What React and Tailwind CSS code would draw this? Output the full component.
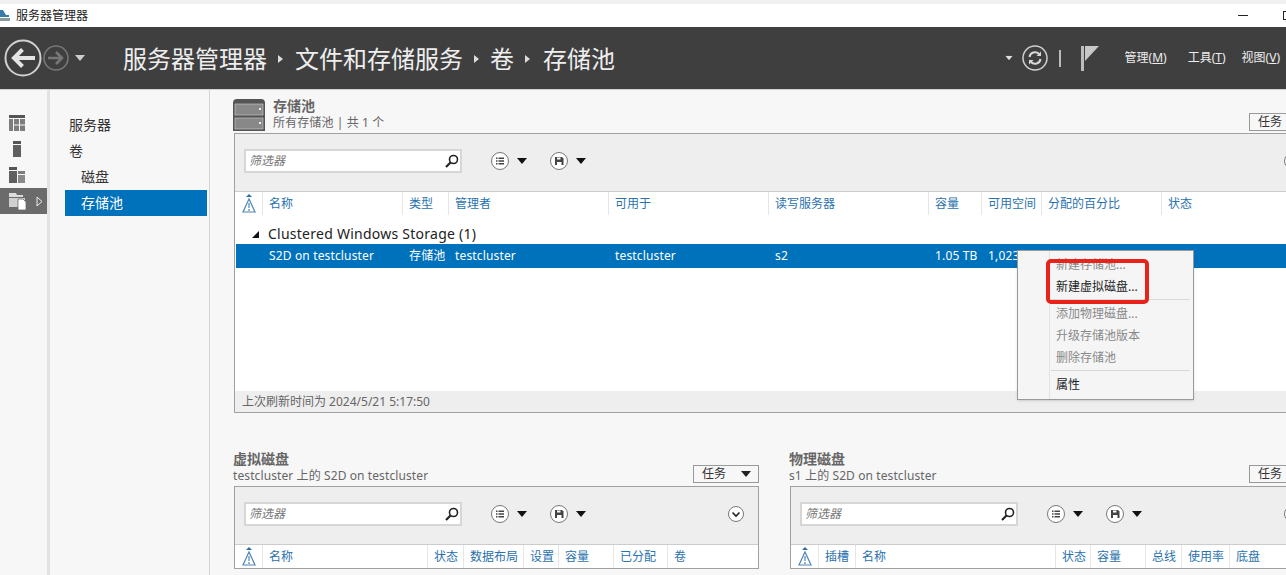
const navItems = [
  { label: '服务器', indent: false },
  { label: '卷', indent: false },
  { label: '磁盘', indent: true },
  { label: '存储池', indent: true, active: true },
];

const poolColumns = ['名称', '类型', '管理者', '可用于', '读写服务器', '容量', '可用空间', '分配的百分比', '状态'];
const poolRow = ['S2D on testcluster', '存储池', 'testcluster', 'testcluster', 's2', '1.05 TB', '1,023 GB'];
const diskColumns = ['名称', '状态', '数据布局', '设置', '容量', '已分配', '卷'];
const physicalColumns = ['插槽', '名称', '状态', '容量', '总线', '使用率', '底盘'];

const Triangle = ({ className = '' }) => (
  <svg width="10" height="6" viewBox="0 0 10 6" className={className}>
    <path d="M0 0h10L5 6z" fill="currentColor" />
  </svg>
);

const BackButton = () => (
  <svg width="38" height="38" viewBox="0 0 38 38" fill="none">
    <circle cx="19" cy="19" r="17.500" stroke="#d0d0d0" strokeWidth="2" />
    <path d="M10 19h21M18.500 10.500L10 19l8.500 8.500" stroke="#e4e4e4" strokeWidth="4" />
  </svg>
);

const ForwardButton = () => (
  <svg width="26" height="26" viewBox="0 0 26 26" fill="none">
    <circle cx="13" cy="13" r="12" stroke="#777" strokeWidth="1.600" />
    <path d="M19 13H5M13 7l6 6-6 6" stroke="#777" strokeWidth="2.600" />
  </svg>
);

const RefreshIcon = () => (
  <svg width="26" height="26" viewBox="0 0 26 26" fill="none">
    <circle cx="13" cy="13" r="12" stroke="#d0d0d0" strokeWidth="1.500" />
    <path d="M7.500 12a5.500 5.500 0 0 1 9.500-3l1 1M18.500 14a5.500 5.500 0 0 1-9.500 3l-1-1" stroke="#d8d8d8" strokeWidth="2" />
    <path d="M19 6.500V11h-4.500zM7 19.500V15h4.500z" fill="#d8d8d8" />
  </svg>
);

const FlagIcon = () => (
  <svg width="18" height="25" viewBox="0 0 18 25">
    <rect x="0" y="0" width="3" height="25" fill="#bdbdbd" />
    <path d="M4 0h14L4 15z" fill="#c8c8c8" />
  </svg>
);

const GridIcon = () => (
  <svg width="16" height="16" viewBox="0 0 16 16">
    <rect width="16" height="3" fill="#555" />
    <path d="M0 4h4v12H0zM5 4h5v5.500H5zM11 4h5v5.500h-5zM5 10.500h5V16H5zM11 10.500h5V16h-5z" fill="#7d7d7d" />
  </svg>
);

const ServerIcon = () => (
  <svg width="16" height="16" viewBox="0 0 16 16">
    <rect x="4" width="8" height="3" fill="#555" />
    <rect x="4" y="4" width="8" height="12" fill="#606060" />
  </svg>
);

const RolesIcon = () => (
  <svg width="16" height="16" viewBox="0 0 16 16">
    <rect width="8" height="3" fill="#555" />
    <rect y="4" width="8" height="12" fill="#606060" />
    <rect x="9" y="4" width="7" height="3" fill="#7d7d7d" />
    <rect x="9" y="8" width="7" height="8" fill="#8a8a8a" />
  </svg>
);

const FilesIcon = () => (
  <svg width="18" height="17" viewBox="0 0 18 17">
    <path d="M0 0h7l1 2h6v2H0z" fill="#dcdcdc" />
    <path d="M0 5h16v9H0z" fill="#d0d0d0" />
    <path d="M9 6h5l3 3v8H9z" fill="#fff" stroke="#6b6b6b" strokeWidth="0.800" />
  </svg>
);

const StorageIcon = () => (
  <svg width="32" height="32" viewBox="0 0 32 32" className="mt-px shrink-0">
    <path d="M4 0h24a4 4 0 0 1 4 4v28H0V4a4 4 0 0 1 4-4z" fill="#555" />
    <rect x="2" y="5" width="28" height="11" fill="#888" stroke="#d0d0d0" strokeWidth="0.600" />
    <rect x="2" y="19" width="28" height="11" fill="#888" stroke="#d0d0d0" strokeWidth="0.600" />
    <rect x="26" y="9" width="2" height="2" fill="#eee" />
    <rect x="26" y="23" width="2" height="2" fill="#eee" />
  </svg>
);

const SearchIcon = () => (
  <svg width="14" height="14" viewBox="0 0 14 14" fill="none">
    <circle cx="8.500" cy="5.500" r="4" stroke="#222" strokeWidth="1.600" />
    <path d="M5.500 8.500L1 13" stroke="#222" strokeWidth="2.200" />
  </svg>
);

const ListCircle = () => (
  <svg width="18" height="18" viewBox="0 0 18 18">
    <circle cx="9" cy="9" r="8.500" fill="#fff" stroke="#777" />
    <path d="M5 5.500h1.500V7H5zM5 8.300h1.500v1.500H5zM5 11h1.500v1.500H5zM7.500 5.500H13V7H7.500zM7.500 8.300H13v1.500H7.500zM7.500 11H13v1.500H7.500z" fill="#444" />
  </svg>
);

const SaveCircle = () => (
  <svg width="18" height="18" viewBox="0 0 18 18">
    <circle cx="9" cy="9" r="8.500" fill="#fff" stroke="#777" />
    <path d="M5 5h7l1.500 1.500V13H5z" fill="#444" />
    <path d="M7 5.500h3.500v2H7zM7 10h4.500v3H7z" fill="#fff" />
  </svg>
);

const ChevronCircle = () => (
  <svg width="16" height="16" viewBox="0 0 16 16" fill="none">
    <circle cx="8" cy="8" r="7.500" fill="#fff" stroke="#777" />
    <path d="M4.500 6.500L8 10l3.500-3.500" stroke="#222" strokeWidth="1.600" />
  </svg>
);

const AlertSortIcon = () => (
  <svg width="14" height="19" viewBox="0 0 14 19" fill="none">
    <path d="M4 3l3-3 3 3z" fill="#2a6ea6" />
    <path d="M7 5L1 18h12z" stroke="#4f86b5" strokeWidth="1.200" />
    <path d="M7 9v5M7 15v2" stroke="#4f86b5" strokeWidth="1.200" />
  </svg>
);

const TasksButton = () => (
  <div className="flex h-[18px] w-[66px] shrink-0 items-center justify-between border border-[#999] bg-[#f7f7f7] pl-2 pr-[7px] text-xs text-[#333]">
    <span>任务</span>
    <Triangle className="text-[#222]" />
  </div>
);

const Toolbar = () => (
  <div className="flex h-[58px] items-start border-b border-[#ccc] bg-[#eee] pl-[9px] pr-[14px] pt-[15px]">
    <div className="flex h-[24px] w-[218px] items-center justify-between border-2 border-[#d6d6d6] bg-white pl-[3px] pr-px">
      <span className="text-xs italic text-[#777]">筛选器</span>
      <SearchIcon />
    </div>
    <div className="ml-[29px] mt-[3px] flex items-center gap-[8px]">
      <ListCircle />
      <Triangle className="text-[#111]" />
    </div>
    <div className="ml-[23px] mt-[3px] flex items-center gap-[8px]">
      <SaveCircle />
      <Triangle className="text-[#111]" />
    </div>
    <div className="ml-auto mt-[4px]">
      <ChevronCircle />
    </div>
  </div>
);

const HeaderRow = ({ columns, gridClass }) => (
  <div className={`grid h-[23px] items-center pl-[1px] text-xs text-[#2a72ad] ${gridClass}`}>
    <div className="flex h-full items-center justify-center">
      <AlertSortIcon />
    </div>
    {columns.map((column) => (
      <div key={column} className="flex h-full items-center whitespace-nowrap border-l border-[#e6e6e6] pl-[6px]">
        {column}
      </div>
    ))}
  </div>
);

const poolGrid = 'grid-cols-[26px_140px_46px_160px_160px_160px_53px_60px_120px_36px]';

const SectionTitle = ({ title, subtitle }) => (
  <div>
    <div className="text-sm font-semibold leading-4 text-[#666]">{title}</div>
    <div className="mt-px text-xs leading-4 tracking-[0.1px] text-[#666]">{subtitle}</div>
  </div>
);

const DetailSection = ({ title, subtitle, columns, gridClass }) => (
  <section>
    <div className="flex items-end justify-between">
      <SectionTitle title={title} subtitle={subtitle} />
      <div className="mb-[1px]">
        <TasksButton />
      </div>
    </div>
    <div className="ml-px mt-[2px] border border-[#a0a0a0] bg-white">
      <Toolbar />
      <HeaderRow columns={columns} gridClass={gridClass} />
    </div>
  </section>
);

const ContextMenu = () => (
  <div className="absolute left-[1017px] top-[250px] w-[177px] border border-[#999] bg-[#f5f5f5] py-[3px] text-xs text-[#888] shadow-sm">
    <div className="absolute bottom-0 left-[31px] top-0 w-px bg-[#e2e2e2]" />
    <div className="flex h-[22px] items-center pl-[38px]">新建存储池...</div>
    <div className="flex h-[22px] items-center pl-[38px] text-[#222]">新建虚拟磁盘...</div>
    <div className="my-[1px] ml-[33px] mr-[3px] h-px bg-[#d8d8d8]" />
    <div className="mt-[3px] flex h-[22px] items-center pl-[38px]">添加物理磁盘...</div>
    <div className="flex h-[22px] items-center pl-[38px]">升级存储池版本</div>
    <div className="flex h-[22px] items-center pl-[38px]">删除存储池</div>
    <div className="my-[1px] ml-[33px] mr-[3px] h-px bg-[#d8d8d8]" />
    <div className="mt-[3px] flex h-[22px] items-center pl-[38px] text-[#222]">属性</div>
  </div>
);

export default function App() {
  return (
    <div className="relative flex h-[575px] w-[1286px] flex-col overflow-hidden bg-[#f7f7f7] font-['Noto_Sans','Noto_Sans_CJK_SC',sans-serif]">
      <div className="h-1 shrink-0 bg-[#f0f0f0]" />

      {/* Title bar */}
      <div className="flex h-[23px] shrink-0 items-center bg-white">
        <svg width="10" height="14" viewBox="0 0 10 14" className="shrink-0">
          <path d="M0 1h3l3 5h3v2H0z" fill="#3a7ca8" />
          <path d="M0 9h10v3H0z" fill="#8a9aa5" />
        </svg>
        <span className="ml-[6px] text-xs text-[#222]">服务器管理器</span>
        <div className="ml-auto mr-[35px] h-px w-[10px] bg-[#222]" />
        <div className="mr-[-7px] h-[9px] w-[10px] border border-[#222]" />
      </div>

      {/* Header */}
      <header className="flex h-[63px] shrink-0 items-center border-b border-[#d0d0d0] bg-[#3f3f3f]">
        <div className="ml-[4px] flex items-center">
          <BackButton />
          <div className="ml-[1px]">
            <ForwardButton />
          </div>
          <Triangle className="ml-[6px] text-[#ccc]" />
        </div>
        <nav className="ml-[38px] mt-px flex items-center gap-[11px] text-2xl leading-8 text-[#eee]">
          <span>服务器管理器</span>
          <span className="h-0 w-0 border-y-4 border-l-[5px] border-y-transparent border-l-[#ddd]" />
          <span className="ml-[1px]">文件和存储服务</span>
          <span className="h-0 w-0 border-y-4 border-l-[5px] border-y-transparent border-l-[#ddd]" />
          <span>卷</span>
          <span className="h-0 w-0 border-y-4 border-l-[5px] border-y-transparent border-l-[#ddd]" />
          <span className="ml-[2px]">存储池</span>
        </nav>
        <div className="ml-auto flex items-center text-xs text-[#eee]">
          <Triangle className="scale-75 text-[#ddd]" />
          <div className="ml-[8px]">
            <RefreshIcon />
          </div>
          <div className="ml-[11px] h-[17px] w-[2px] bg-[#bbb]" />
          <div className="ml-[20px]">
            <FlagIcon />
          </div>
          <span className="ml-[26px]">管理(<span className="underline">M</span>)</span>
          <span className="ml-[21px]">工具(<span className="underline">T</span>)</span>
          <span className="ml-[16px] mr-[6px] whitespace-nowrap">视图(<span className="underline">V</span>)</span>
        </div>
      </header>

      <div className="flex min-h-0 flex-1">
        {/* Left rail */}
        <aside className="flex w-[50px] shrink-0 flex-col border-r-[3px] border-[#e2e2e2] bg-[#f7f7f7] pt-[20px]">
          <div className="flex h-[26px] items-center pl-[9px]"><GridIcon /></div>
          <div className="flex h-[26px] items-center pl-[9px]"><ServerIcon /></div>
          <div className="flex h-[26px] items-center pl-[9px]"><RolesIcon /></div>
          <div className="flex h-[26px] items-center bg-[#6b6b6b] pl-[9px]">
            <FilesIcon />
            <svg width="7" height="11" viewBox="0 0 7 11" className="ml-[9px]" fill="none">
              <path d="M1 1l5 4.500L1 10z" stroke="#eee" />
            </svg>
          </div>
        </aside>

        {/* Section nav */}
        <nav className="flex w-[160px] shrink-0 flex-col border-r border-[#d4d4d4] pl-[15px] pr-[2px] pt-[22px] text-sm text-[#333]">
          {navItems.map((item) => (
            <div
              key={item.label}
              className={`flex h-[26px] items-center ${item.indent ? 'pl-[16px]' : 'pl-[4px]'} ${item.active ? 'bg-[#0072bc] text-white' : ''}`}
            >
              {item.label}
            </div>
          ))}
        </nav>

        {/* Main */}
        <main className="min-w-0 flex-1 overflow-hidden pl-[23px] pt-[8px]">
          <div className="w-[1082px]">
            <div className="flex items-start justify-between">
              <div className="flex gap-2">
                <StorageIcon />
                <SectionTitle title="存储池" subtitle="所有存储池 | 共 1 个" />
              </div>
              <div className="mt-[15px]">
                <TasksButton />
              </div>
            </div>

            <div className="ml-px mt-[2px] flex h-[280px] flex-col border border-[#a0a0a0] bg-white">
              <Toolbar />
              <HeaderRow columns={poolColumns} gridClass={poolGrid} />
              <div className="flex h-[29px] items-end pl-[17px] text-sm tracking-[0.25px] text-[#222]">
                <div className="flex h-[20px] items-center">
                  <svg width="7" height="7" viewBox="0 0 7 7">
                    <path d="M7 0v7H0z" fill="#111" />
                  </svg>
                  <span className="ml-[9px]">Clustered Windows Storage (1)</span>
                </div>
              </div>
              <div className={`ml-[1px] grid h-[24px] items-center bg-[#0072bc] text-xs tracking-[0.15px] text-white ${poolGrid}`}>
                <div />
                {poolRow.map((cell) => (
                  <div key={cell} className="whitespace-nowrap pl-[7px]">{cell}</div>
                ))}
              </div>
              <div className="flex-1" />
              <div className="flex h-[21px] items-center bg-[#eee] pl-[7px] text-xs text-[#666]">
                上次刷新时间为 2024/5/21 5:17:50
              </div>
            </div>

            <div className="mt-[38px] grid grid-cols-[526px_526px] gap-x-[30px]">
              <DetailSection
                title="虚拟磁盘"
                subtitle="testcluster 上的 S2D on testcluster"
                columns={diskColumns}
                gridClass="grid-cols-[26px_165px_36px_60px_35px_55px_54px_40px]"
              />
              <DetailSection
                title="物理磁盘"
                subtitle="s1 上的 S2D on testcluster"
                columns={physicalColumns}
                gridClass="grid-cols-[26px_37px_200px_35px_55px_36px_48px_50px]"
              />
            </div>
          </div>
        </main>
      </div>

      <ContextMenu />
      {/* Red annotation drawn over the menu */}
      <div className="absolute left-[1046px] top-[259px] h-[45px] w-[103px] rounded-[5px] border-4 border-[#e8231c]" />
    </div>
  );
}
